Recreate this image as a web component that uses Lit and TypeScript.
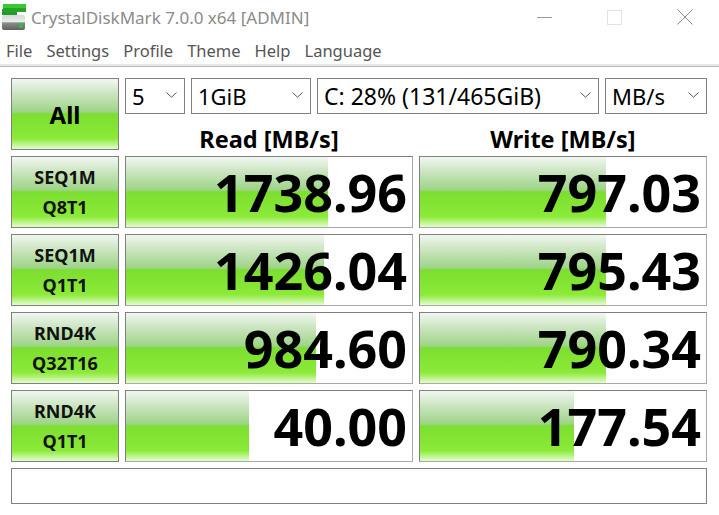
import { LitElement, html, css, svg } from "lit";
import { customElement } from "lit/decorators.js";

const rows = [
  { a: "SEQ1M", b: "Q8T1", r: "1738.96", rw: 202, w: "797.03", ww: 186 },
  { a: "SEQ1M", b: "Q1T1", r: "1426.04", rw: 198, w: "795.43", ww: 186 },
  { a: "RND4K", b: "Q32T16", r: "984.60", rw: 190, w: "790.34", ww: 186 },
  { a: "RND4K", b: "Q1T1", r: "40.00", rw: 123, w: "177.54", ww: 154 },
];

const chevron = svg`<svg class="chev" width="11" height="6" viewBox="0 0 11 6"><path d="M.5.5 5.5 5.2 10.5.5" fill="none" stroke="#555" stroke-width="1"/></svg>`;

@customElement("app-root")
export class AppRoot extends LitElement {
  static styles = css`
    :host { display: block; width: 719px; height: 515px; background: #fff; overflow: hidden;
      font-family: "Noto Sans", "Open Sans", sans-serif; color: #000; }
    .title { height: 33px; display: flex; align-items: center; }
    .icon { margin: 0 5px 0 2px; flex: none; }
    .title-text { font-size: 17px; color: #8b8b8b; flex: 1; white-space: nowrap; padding-top: 2px; }
    .ctrls { display: flex; align-items: center; margin-right: 26px; gap: 55px; padding-top: 1px; }
    .menu { height: 33px; box-sizing: border-box; display: flex; align-items: center; gap: 14px; padding: 3px 0 0 6px; font-size: 16.5px; color: #555; border-bottom: 2px solid #e9e9e9; box-shadow: 0 1px 0 #bdbdbd; }
    .grid { display: grid; grid-template-columns: 108px 288px 288px; grid-auto-rows: 72px; gap: 6px; padding: 12px 0 0 11px; }
    .glass { background: linear-gradient(180deg, #f1f7f1 0%, #c9e4bd 22%, #9ed488 47%, #7cde30 50%, #8cea38 85%, #e4fcd0 100%); }
    .btn { border: 1px solid #808080; box-sizing: border-box; display: flex; flex-direction: column; align-items: center; justify-content: center; font-weight: 600; }
    .all { font-size: 24px; font-weight: 700; }
    .test { font-size: 18px; line-height: 30px; font-weight: 700; color: #111; }
    .top { grid-column: 2 / 4; display: flex; flex-direction: column; }
    .selects { display: flex; gap: 6px; height: 36px; }
    .select { border: 1px solid #808080; box-sizing: border-box; display: flex; align-items: center; justify-content: space-between; font-size: 22px; padding: 0 7px 0 6px; }
    .chev { margin-bottom: 2px; }
    .s1 { width: 60px; } .s2 { width: 120px; } .s3 { width: 282px; font-size: 23px; } .s4 { width: 102px; }
    .heads { display: grid; grid-template-columns: 288px 288px; gap: 6px; height: 36px; }
    .head { font-size: 23.5px; font-weight: 700; text-align: center; line-height: 50px; height: 36px; white-space: nowrap; }
    .cell { position: relative; border: 1px solid; border-color: #808080 #a9a9a9 #a9a9a9 #808080; box-sizing: border-box; display: flex; align-items: center; justify-content: flex-end; overflow: hidden; background: #fff; }
    .bar { position: absolute; left: 0; top: 0; bottom: 0; }
    .val { position: relative; font-size: 52px; font-weight: 700; line-height: 1; padding-right: 5px; }
    .status { grid-column: 1 / 4; height: 36px; border: 1px solid #808080; box-sizing: border-box; }
  `;

  render() {
    return html`
      <div class="title">
        <svg class="icon" width="24" height="26" viewBox="0 0 24 26">
          <defs>
            <linearGradient id="d" x1="0" y1="0" x2="0" y2="1"><stop offset="0" stop-color="#d5d8d5"/><stop offset=".45" stop-color="#eceeec"/><stop offset=".52" stop-color="#8a8f8b"/><stop offset="1" stop-color="#5b615c"/></linearGradient>
          </defs>
          <rect x="0" y="11" width="23" height="15" rx="2" fill="url(#d)"/>
          <rect x="0" y="5" width="15" height="6" fill="#1f9c2a"/>
          <rect x="1" y="0" width="23" height="4" fill="#36c933"/>
          <rect x="1" y="4" width="23" height="4" fill="#2a9f2a"/>
          <rect x="17" y="19" width="4" height="5" fill="#3bb54a"/>
        </svg>
        <span class="title-text">CrystalDiskMark 7.0.0 x64 [ADMIN]</span>
        <div class="ctrls">
          <svg width="15" height="15" viewBox="0 0 15 15"><path d="M0 7.5H15" stroke="#999"/></svg>
          <svg width="15" height="15" viewBox="0 0 15 15"><rect x=".5" y=".5" width="14" height="14" fill="none" stroke="#e2e2e2"/></svg>
          <svg width="16" height="16" viewBox="0 0 16 16"><path d="M.5.5 15.5 15.5M15.5.5.5 15.5" stroke="#8a8a8a" fill="none"/></svg>
        </div>
      </div>
      <div class="menu">
        <span>File</span><span>Settings</span><span>Profile</span><span>Theme</span><span>Help</span><span>Language</span>
      </div>
      <div class="grid">
        <div class="btn glass all">All</div>
        <div class="top">
          <div class="selects">
            <div class="select s1">5 ${chevron}</div>
            <div class="select s2">1GiB ${chevron}</div>
            <div class="select s3">C: 28% (131/465GiB) ${chevron}</div>
            <div class="select s4">MB/s ${chevron}</div>
          </div>
          <div class="heads">
            <div class="head">Read [MB/s]</div>
            <div class="head">Write [MB/s]</div>
          </div>
        </div>
        ${rows.map(
          (r) => html`
            <div class="btn glass test"><span>${r.a}</span><span>${r.b}</span></div>
            <div class="cell"><div class="bar glass" style="width:${r.rw}px"></div><span class="val">${r.r}</span></div>
            <div class="cell"><div class="bar glass" style="width:${r.ww}px"></div><span class="val">${r.w}</span></div>
          `
        )}
        <div class="status"></div>
      </div>
    `;
  }
}
